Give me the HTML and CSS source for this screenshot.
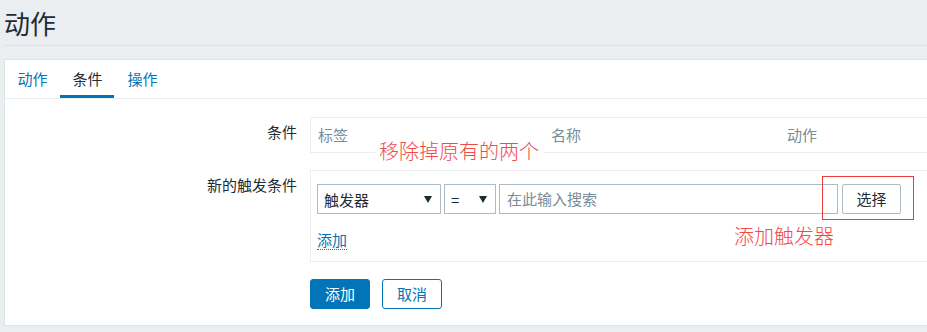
FILE: index.html
```html
<!DOCTYPE html>
<html lang="zh">
<head>
<meta charset="utf-8">
<link rel="stylesheet" href="styles.css">
</head>
<body>
<div class="page">
  <header class="header"><h1 class="title">动作</h1></header>
  <div class="card">
    <nav class="tabs">
      <a class="tab">动作</a>
      <a class="tab tab-active">条件</a>
      <a class="tab">操作</a>
    </nav>
    <div class="form">
      <div class="label">条件</div>
      <div class="field">
        <div class="cond-table">
          <div class="th">标签</div>
          <div class="th">名称</div>
          <div class="th">动作</div>
        </div>
      </div>
      <div class="label">新的触发条件</div>
      <div class="field">
        <div class="new-box">
          <div class="controls">
            <div class="select select-wide"><span>触发器</span><i class="arrow"></i></div>
            <div class="select select-narrow"><span>=</span><i class="arrow"></i></div>
            <div class="input">在此输入搜索</div>
            <div class="btn-select">选择</div>
          </div>
          <a class="link">添加</a>
        </div>
      </div>
      <div class="label"></div>
      <div class="field buttons">
        <div class="btn btn-primary">添加</div>
        <div class="btn btn-outline">取消</div>
      </div>
    </div>
    <div class="note note-remove">移除掉原有的两个</div>
    <div class="note note-add">添加触发器</div>
    <div class="highlight"></div>
  </div>
</div>
</body>
</html>
```
FILE: styles.css
```css
html, body {
  margin: 0;
  padding: 0;
  overflow: hidden;
}
body {
  background: #ebeef0;
  font-family: "Noto Sans CJK SC", "Liberation Sans", sans-serif;
  font-size: 15px;
  color: #1f2c33;
  width: 927px;
  height: 332px;
}
.page {
  padding-left: 4px;
}
.header {
  height: 45px;
  border-bottom: 1px solid #dde2e5;
}
.title {
  margin: 0;
  padding-left: 0;
  font-size: 26px;
  font-weight: normal;
  line-height: 45px;
  color: #1f2c33;
}
.card {
  position: relative;
  margin-top: 13px;
  background: #fff;
  border: 1px solid #dfe4e7;
  border-right: none;
  height: 267px;
  box-sizing: border-box;
}
.tabs {
  display: flex;
  gap: 0;
  height: 38px;
  border-bottom: 1px solid #ebeef0;
}
.tab {
  display: block;
  width: 55px;
  box-sizing: border-box;
  text-align: center;
  line-height: 38px;
  color: #0275b8;
  position: relative;
}
.tab-active {
  color: #1f2c33;
}
.tab-active::after {
  content: "";
  position: absolute;
  left: 0;
  right: 1px;
  bottom: 0;
  height: 3px;
  background: #0275b8;
}
.form {
  display: grid;
  grid-template-columns: 292px 1fr;
  column-gap: 13px;
  padding-top: 18px;
}
.label {
  text-align: right;
  line-height: 20px;
  padding-top: 5px;
}
.field {
  min-width: 0;
}
.cond-table {
  display: grid;
  grid-template-columns: 233px 236px 236px;
  width: 800px;
  height: 36px;
  box-sizing: border-box;
  border: 1px solid #ebeef0;
  border-right: none;
  margin-bottom: 17px;
}
.th {
  padding-left: 7px;
  line-height: 34px;
  color: #768d99;
}
.new-box {
  width: 800px;
  box-sizing: border-box;
  border: 1px solid #ebeef0;
  border-right: none;
  padding: 13px 0 11px 6px;
  margin-bottom: 17px;
}
.controls {
  display: flex;
  align-items: center;
  height: 30px;
}
.select {
  display: flex;
  align-items: center;
  justify-content: space-between;
  height: 30px;
  box-sizing: border-box;
  border: 1px solid #acbbc4;
  padding: 0 8px 0 6px;
  margin-right: 3px;
}
.select-wide { width: 124px; }
.select-narrow { width: 52px; }
.arrow {
  width: 0;
  height: 0;
  border-left: 4px solid transparent;
  border-right: 4px solid transparent;
  border-top: 7px solid #1f2c33;
}
.input {
  width: 339px;
  height: 30px;
  box-sizing: border-box;
  border: 1px solid #acbbc4;
  padding-left: 7px;
  line-height: 28px;
  color: #768d99;
  margin-right: 4px;
}
.btn-select {
  width: 59px;
  height: 30px;
  box-sizing: border-box;
  border: 1px solid #acbbc4;
  border-radius: 2px;
  text-align: center;
  line-height: 28px;
}
.link {
  display: inline-block;
  margin-top: 17px;
  line-height: 18px;
  color: #0275b8;
  border-bottom: 1px dotted #0275b8;
}
.buttons {
  display: flex;
  gap: 12px;
}
.btn {
  width: 60px;
  height: 30px;
  box-sizing: border-box;
  border-radius: 3px;
  text-align: center;
  line-height: 28px;
}
.btn-primary {
  background: #0275b8;
  border: 1px solid #0275b8;
  color: #fff;
}
.btn-outline {
  border: 1px solid #0275b8;
  color: #0275b8;
}
.note {
  position: absolute;
  background: #fff;
  color: #f04a4a;
  font-size: 20px;
  line-height: 24px;
  font-weight: 300;
  white-space: nowrap;
}
.note-remove {
  left: 370px;
  top: 79px;
  padding: 0 4px;
}
.note-add {
  left: 725px;
  top: 164px;
  padding: 0 4px;
}
.highlight {
  position: absolute;
  left: 817px;
  top: 116px;
  width: 92px;
  height: 44px;
  box-sizing: border-box;
  border: 1px solid #e83a3a;
}
```
